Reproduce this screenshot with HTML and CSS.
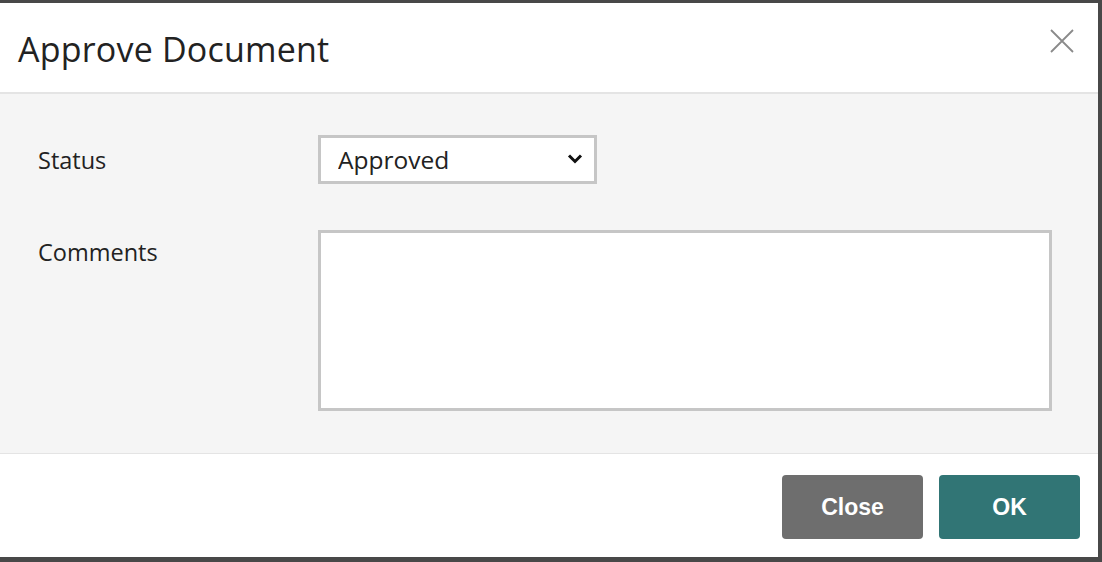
FILE: index.html
```html
<!DOCTYPE html>
<html lang="en">
<head>
<meta charset="utf-8">
<title>Approve Document</title>
<link rel="stylesheet" href="styles.css">
</head>
<body>
<div class="dialog">
  <header class="dialog-head">
    <h1 class="dialog-title">Approve Document</h1>
    <button class="dialog-x" type="button" aria-label="Close">
      <svg width="24" height="24" viewBox="0 0 24 24"><path d="M1 1 L23 23 M23 1 L1 23" stroke="#8a8a8a" stroke-width="1.8" fill="none"/></svg>
    </button>
  </header>
  <section class="dialog-body">
    <div class="field">
      <label class="field-label" for="status">Status</label>
      <div class="select-wrap">
        <select id="status" class="select"><option>Approved</option></select>
        <svg class="select-chevron" width="16" height="11" viewBox="0 0 16 11"><path d="M2 2.5 L8 8.5 L14 2.5" stroke="#111" stroke-width="3" fill="none"/></svg>
      </div>
    </div>
    <div class="field field-comments">
      <label class="field-label" for="comments">Comments</label>
      <textarea id="comments" class="textarea"></textarea>
    </div>
  </section>
  <footer class="dialog-foot">
    <button class="btn btn-close" type="button">Close</button>
    <button class="btn btn-ok" type="button">OK</button>
  </footer>
</div>
</body>
</html>
```

FILE: styles.css
```css
html {
  background: #484848;
}
body {
  margin: 0;
  padding-top: 3px;
  width: 1102px;
  height: 562px;
  box-sizing: border-box;
}
.dialog {
  width: 1098px;
  height: 554px;
  background: #fff;
  display: flex;
  flex-direction: column;
  font-family: "Open Sans", "Noto Sans", sans-serif;
  color: #222;
}
.dialog-head {
  height: 89px;
  flex: none;
  display: flex;
  align-items: center;
  justify-content: space-between;
  padding: 0 24px 0 18px;
  border-bottom: 2px solid #e4e4e4;
}
.dialog-title {
  margin: 0 0 -2px;
  font-weight: 400;
  font-size: 34px;
  color: #222;
  letter-spacing: 0.2px;
}
.dialog-x {
  border: 0;
  background: none;
  padding: 0;
  width: 24px;
  height: 24px;
  margin-bottom: 14px;
}
.dialog-x svg {
  display: block;
}
.dialog-body {
  flex: 1;
  background: #f5f5f5;
  padding: 41px 0 0 38px;
  display: flex;
  flex-direction: column;
  gap: 46px;
}
.field {
  display: flex;
  align-items: center;
}
.field-comments {
  align-items: flex-start;
}
.field-label {
  width: 280px;
  font-size: 23.5px;
}
.field-comments .field-label {
  padding-top: 6px;
}
.select-wrap {
  position: relative;
  width: 279px;
  height: 49px;
}
.select {
  appearance: none;
  -webkit-appearance: none;
  width: 100%;
  height: 100%;
  border: 3px solid #c6c6c6;
  border-radius: 0;
  background: #fff;
  padding: 0 0 0 17px;
  font-family: "Open Sans", "Noto Sans", sans-serif;
  font-size: 24.5px;
  color: #222;
  box-sizing: border-box;
}
.select-chevron {
  position: absolute;
  right: 14px;
  top: 18px;
  pointer-events: none;
}
.textarea {
  width: 734px;
  height: 181px;
  box-sizing: border-box;
  border: 3px solid #c6c6c6;
  border-radius: 0;
  background: #fff;
  resize: none;
  margin: 0;
}
.dialog-foot {
  height: 104px;
  flex: none;
  border-top: 1px solid #e4e4e4;
  display: flex;
  justify-content: flex-end;
  align-items: flex-start;
  gap: 16px;
  padding: 21px 18px 0 0;
  box-sizing: border-box;
}
.btn {
  width: 141px;
  height: 64px;
  border: 0;
  border-radius: 4px;
  color: #fff;
  font-family: "Liberation Sans", Arial, sans-serif;
  font-weight: 700;
  font-size: 23px;
}
.btn-close {
  background: #6e6e6e;
}
.btn-ok {
  background: #317575;
}
```
